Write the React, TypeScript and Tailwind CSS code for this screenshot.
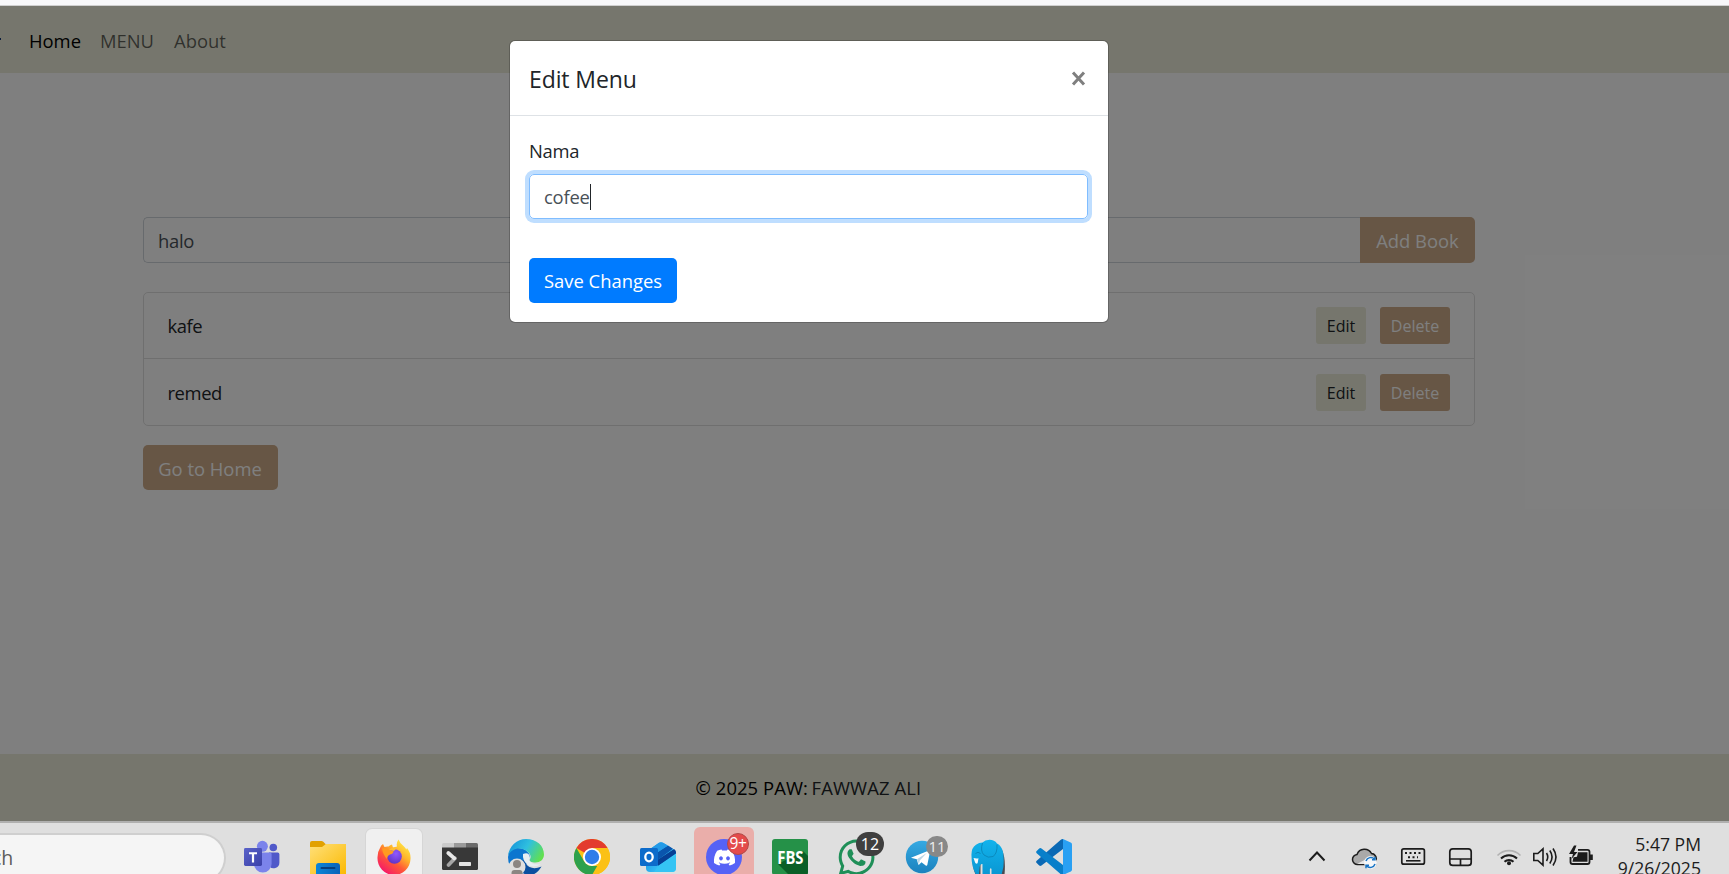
import React from "react";
import { FaDiscord, FaWhatsapp } from "react-icons/fa";

function TeamsIcon() {
  return (
    <svg width="36" height="36" viewBox="0 0 36 36">
      <defs>
        <linearGradient id="tm" x1="0" y1="0" x2="1" y2="1">
          <stop offset="0" stopColor="#5a63c9" />
          <stop offset="1" stopColor="#3a40a8" />
        </linearGradient>
      </defs>
      <circle cx="29.3" cy="8.5" r="3.8" fill="#5059c9" />
      <path d="M25 13.5h8.6a1.8 1.8 0 0 1 1.8 1.8v8.2a5.6 5.6 0 0 1-10.4 3z" fill="#5059c9" />
      <circle cx="18.4" cy="7.3" r="5.5" fill="#7b83eb" />
      <path d="M10 13.5h16a1.6 1.6 0 0 1 1.6 1.6v9.6a8.8 8.8 0 0 1-17.6 0z" fill="#7b83eb" />
      <rect x="0" y="9" width="18" height="18" rx="1.4" fill="url(#tm)" />
      <path d="M5 13.2h8v2h-2.9v8.4H7.9v-8.4H5z" fill="#fff" />
    </svg>
  );
}

function ExplorerIcon() {
  return (
    <svg width="36" height="36" viewBox="0 0 36 36">
      <defs>
        <linearGradient id="ex" x1="0" y1="0" x2="1" y2="1">
          <stop offset="0" stopColor="#ffe07a" />
          <stop offset="1" stopColor="#fbb900" />
        </linearGradient>
        <linearGradient id="exb" x1="0" y1="0" x2="1" y2="0">
          <stop offset="0" stopColor="#0b86d8" />
          <stop offset="1" stopColor="#0b62b8" />
        </linearGradient>
      </defs>
      <path d="M0 4q0-2 2-2h9.500q1 0 1.800.8L16 5.500V12H0z" fill="#e2a100" />
      <path d="M0 8h12l4-3h20v31H0z" fill="url(#ex)" />
      <path d="M6 36v-9q0-3 3-3h18q3 0 3 3v9z" fill="url(#exb)" />
      <rect x="10.500" y="28" width="15" height="2" rx="1" fill="#063f7e" />
    </svg>
  );
}

function FirefoxIcon() {
  return (
    <svg width="36" height="36" viewBox="0 0 36 36">
      <defs>
        <linearGradient id="ff" x1="0.85" y1="0.05" x2="0.2" y2="0.95">
          <stop offset="0" stopColor="#fff04a" />
          <stop offset="0.35" stopColor="#ffb42a" />
          <stop offset="0.62" stopColor="#ff5a36" />
          <stop offset="1" stopColor="#f5156c" />
        </linearGradient>
        <radialGradient id="ffp" cx="0.6" cy="0.3" r="0.8">
          <stop offset="0" stopColor="#9059ff" />
          <stop offset="1" stopColor="#5b2fc0" />
        </radialGradient>
      </defs>
      <path d="M4 9q1-3 3-4l1.500 3q2-.8 4-.5Q14 6 16 5.500l1 3 4-1Q20 4 22.500.5q1.500 4 5 6.500 2 1.500 2.800 3.500l.7-1.500q4 5 3.500 11A16.500 16.500 0 0 1 1.500 19Q1.300 13 4 9z" fill="url(#ff)" />
      <circle cx="18.500" cy="17.500" r="7.300" fill="url(#ffp)" />
      <path d="M6 9.500q4-1.500 7 1.500l4.500 1.300q.2 2.200-3.500 3.200-3 1.500-3 4.500-4-4-5-10.500z" fill="#ff9a1f" />
      <path d="M13 11q4-4 9-1.500-3 .2-4 2.500z" fill="#ffbd2e" />
    </svg>
  );
}

function TerminalIcon() {
  return (
    <svg width="36" height="36" viewBox="0 0 36 36">
      <path d="M0 9V5.500Q0 4 1.500 4H12v5z" fill="#cbcbcb" />
      <path d="M12 4h12v5H12z" fill="#9a9a9a" />
      <path d="M24 4h10.500Q36 4 36 5.500V9H24z" fill="#6b6b6b" />
      <path d="M0 8.500h36v21q0 1.500-1.500 1.500h-33Q0 31 0 29.500z" fill="#383838" />
      <path d="M13 19.300L6.500 26" stroke="#a5a5a5" strokeWidth="3.800" strokeLinecap="round" />
      <path d="M6.300 14l6 5.300" stroke="#e8e8e8" strokeWidth="3.800" strokeLinecap="round" />
      <rect x="17" y="23" width="12" height="4" rx=".8" fill="#e4e4e4" />
    </svg>
  );
}

function EdgeIcon() {
  return (
    <svg width="36" height="36" viewBox="0 0 36 36">
      <defs>
        <linearGradient id="ed" x1="0" y1="0.2" x2="1" y2="0.6">
          <stop offset="0" stopColor="#1493da" />
          <stop offset="0.5" stopColor="#2fc0df" />
          <stop offset="1" stopColor="#62e04f" />
        </linearGradient>
      </defs>
      <path d="M0 18Q1 8 10 9q9 0 12 8l-8 19Q0 32 0 18z" fill="#0c76cf" />
      <path d="M12 22q-3 12 8 14 8 1 13.500-8.500-7 3-12 .5-4-2-5-7z" fill="#0b4fa0" />
      <path d="M0 17C1 7 9 0 18 0c11 0 18 7 18 15.500 0 5-4 8-8.500 8-4 0-7-1-5.500-3.500 1.600-2 .2-5-1.500-6.500C14 7 3 9 0 17z" fill="url(#ed)" />
      <path d="M15 15q5-2 6.500 1.500.8 2-.7 4.500l3 3q3 2 9 1.500-8 4-13.500 0-5-4-4.300-10.500z" fill="#e7eef2" />
      <circle cx="9" cy="28" r="8.500" fill="#e0dfde" />
      <circle cx="9" cy="25" r="4" fill="#8b8682" />
      <path d="M3.500 36v-2q0-3 3-3h5q3 0 3 3v2z" fill="#8b8682" />
    </svg>
  );
}

function ChromeIcon() {
  return (
    <svg width="36" height="36" viewBox="0 0 36 36">
      <circle cx="18" cy="18" r="18" fill="#fbc116" />
      <path d="M18 18L2.400 9A18 18 0 0 1 33.600 9H18z" fill="#e33b2e" />
      <path d="M2.400 9l7.800 13.500Q13 27 18 27h7.800L18.500 36A18 18 0 0 1 2.400 9z" fill="#2da14c" />
      <path d="M25.800 22.500L18 36a18 18 0 0 0 15.600-27H18z" fill="#fbc116" />
      <circle cx="18" cy="18" r="9" fill="#fff" />
      <circle cx="18" cy="18" r="7.200" fill="#2f7de9" />
    </svg>
  );
}

function OutlookIcon() {
  return (
    <svg width="36" height="36" viewBox="0 0 36 36">
      <defs>
        <linearGradient id="ol" x1="0" y1="0" x2="1" y2="0.5">
          <stop offset="0" stopColor="#1b8fe0" />
          <stop offset="1" stopColor="#41d4ff" />
        </linearGradient>
      </defs>
      <path d="M6 13L19 3.800q2-1.200 4 0L34.500 11q1.500 1 1.500 3v15q0 4-4 4H10q-4 0-4-4z" fill="url(#ol)" />
      <path d="M16 14L28 6.500l5 3.200-15 11z" fill="#0a55ad" />
      <path d="M10 10l9-6.200q2-1.200 4 0l5 2.700-12 8z" fill="#249be8" />
      <path d="M18 20.500L34 10q2.500 1.500 2 4.500L18 27z" fill="#063f95" />
      <path d="M18 27l18-11.500V29q0 4-4 4H14z" fill="#35c4f4" />
      <rect x="0" y="9" width="18" height="18" rx="1.500" fill="#0d6ccb" />
      <ellipse cx="9" cy="18" rx="3.700" ry="4.300" fill="none" stroke="#fff" strokeWidth="2.300" />
    </svg>
  );
}

function TelegramIcon() {
  return (
    <svg width="36" height="36" viewBox="0 0 36 36">
      <defs>
        <linearGradient id="tg" x1="0" y1="0" x2="0" y2="1">
          <stop offset="0" stopColor="#35a9e2" />
          <stop offset="1" stopColor="#1b82be" />
        </linearGradient>
      </defs>
      <circle cx="18" cy="18" r="16.200" fill="url(#tg)" />
      <path d="M7.500 18.500L25 11.500q1.200-.3 1 1L23.300 26q-.4 1.200-1.600.5l-4.200-3.200-2.300 2.300q-.7.5-1-.4l-1.400-4.900-5-1.200q-1.200-.2-.3-.6z" fill="#fff" />
      <path d="M13 20.300l10-6.500-7.200 7.700-.8 4z" fill="#b9d5e6" />
    </svg>
  );
}

function ElephantIcon() {
  return (
    <svg width="36" height="36" viewBox="0 0 36 36">
      <defs>
        <linearGradient id="el" x1="0" y1="0" x2="0" y2="1">
          <stop offset="0" stopColor="#12b3ec" />
          <stop offset="1" stopColor="#0a97d3" />
        </linearGradient>
      </defs>
      <path d="M2.500 23q1 9 3.500 13h4.500V25zM32 11q4 8 2.500 25H22V24z" fill="#4a4a50" />
      <path d="M1.500 17Q1 9 6 5.800 9 3.500 12.500 3.500 15 .8 19.500.8q5 0 7.500 3.700 4.500 2 6 8.500 1.200 6 .4 15L31.500 36h-10v-6q-.8-1.500-1.600 0v6h-7.400V25q-2.300-.5-2.800 3L9 35.500H6Q1.500 28 1.500 17z" fill="url(#el)" />
      <path d="M12.500 4q-2.500 8 1.500 12 4 3.500 9 1.500 4.500-3 4-12M5.500 14.500q2.500-2.500 5 0" stroke="#0a86b8" strokeWidth="0.900" fill="none" />
      <path d="M3.500 19q2.500.8 5 .3l-.9 5q-2 1-2.500-.8z" fill="#f4fafc" />
    </svg>
  );
}

function CodeIcon() {
  return (
    <svg width="36" height="36" viewBox="0 0 36 36">
      <path d="M27 0v10L5.500 26.500q-1.200.9-2.300 0l-2.500-2.400q-1.200-1.200 0-2.400L24.500 1q1-1 2.500-1z" fill="#0a69b5" />
      <path d="M27 36V26L5.500 9.500q-1.200-.9-2.300 0L.7 11.900q-1.200 1.200 0 2.400L24.500 35q1 1 2.500 1z" fill="#087fca" />
      <path d="M27 0l7.700 3.500q1.300.6 1.300 2v25q0 1.400-1.300 2L27 36z" fill="#29a0f3" />
    </svg>
  );
}

function Slot({ children }: { children: React.ReactNode }) {
  return <div className="relative flex h-[52px] w-[66px] shrink-0 justify-center pt-4">{children}</div>;
}

function Taskbar() {
  return (
    <div className="flex h-[53px] shrink-0 overflow-hidden border-t-2 border-[#b0b0af] bg-[#dfdfdf] text-[#1c1c1c]">
      <div className="flex h-[51px] w-[229px] shrink-0">
        <div className="mt-[10px] h-[50px] w-[226px] shrink-0 rounded-r-full border-2 border-l-0 border-[#cfcfcf] bg-[#f5f5f5] pt-[9px] text-[19.5px] leading-[27px] text-[#5c5c5c]">
          <span className="-ml-[8px]">ch</span>
        </div>
      </div>
      <Slot><TeamsIcon /></Slot>
      <Slot><ExplorerIcon /></Slot>
      <div className="flex h-[52px] w-[66px] shrink-0 px-[5px] pt-[6px]">
        <div className="flex h-[60px] w-full justify-center rounded-md bg-[#f0f0f0] pt-[10px] ring-1 ring-[#d6d6d6]"><FirefoxIcon /></div>
      </div>
      <Slot><TerminalIcon /></Slot>
      <Slot><EdgeIcon /></Slot>
      <Slot><ChromeIcon /></Slot>
      <Slot><OutlookIcon /></Slot>
      <div className="relative flex h-[52px] w-[66px] shrink-0 px-[3px] pt-[4px]">
        <div className="flex h-[60px] w-full justify-center rounded-md bg-[#eaaeaa] pt-3">
          <div className="flex size-9 items-center justify-center rounded-full bg-[#5662f6]">
            <FaDiscord size={23} color="#fff" />
          </div>
        </div>
        <span className="absolute left-[36px] top-[10px] flex size-[22px] items-center justify-center rounded-full border border-[#b04a48] bg-[#e44b4b] text-[15.5px] leading-none tracking-tight text-white">9+</span>
      </div>
      <Slot>
        <div className="relative flex size-9 items-center justify-center overflow-hidden rounded-[3px] bg-[#259148]">
          <svg className="absolute inset-0" width="36" height="36" viewBox="0 0 36 36"><path d="M31 12l5 5v19H17L6 25z" fill="#0a5f27" /></svg>
          <span className="relative scale-x-[0.8] text-[18.5px] font-bold leading-none text-white">FBS</span>
        </div>
      </Slot>
      <Slot>
        <FaWhatsapp size={41} color="#1f8f58" className="-mt-[2px] shrink-0" />
        <span className="absolute left-[33px] top-[9px] flex h-6 w-7 items-center justify-center rounded-full bg-[#3f3f3f] text-[16px] leading-none text-white">12</span>
      </Slot>
      <Slot>
        <TelegramIcon />
        <span className="absolute left-[37px] top-[12.500px] flex h-[21px] w-[22px] items-center justify-center rounded-full bg-[#888] text-[15px] leading-none text-[#eee]">11</span>
      </Slot>
      <Slot><ElephantIcon /></Slot>
      <Slot><CodeIcon /></Slot>
      <div className="ml-auto flex h-[52px] shrink-0 pr-7">
        <svg className="mt-[25px] overflow-visible" width="293" height="22" viewBox="1306 848 293 22" fill="none" stroke="#1c1c1c" strokeWidth="1.700">
          <path d="M1309.500 860.500l7.500-8 7.500 8" strokeWidth="2" />
          <path d="M1358 864.500a5 5 0 0 1-1-10 8 8 0 0 1 14.500-1 5.500 5.500 0 0 1 4 8.500v2.500z" fill="#a9a9a9" strokeWidth="1.500" />
          <path d="M1357 864l13-7 5.500 3v4z" fill="#e6e6e6" stroke="none" />
          <circle cx="1370.500" cy="862.500" r="6.500" fill="#f5f7f9" stroke="none" />
          <path d="M1366 861a5 5 0 0 1 8.500-1.800M1375 864a5 5 0 0 1-8.500 1.800M1375 856.800v3h-3M1366 868.200v-3h3" stroke="#1673c4" strokeWidth="1.500" />
          <rect x="1401.800" y="848.800" width="22.600" height="15.400" rx="2" />
          <path d="M1405 853h15.500M1408 857.200h10" strokeWidth="2" strokeDasharray="2 2.500" />
          <path d="M1406 860.800h14.500" strokeWidth="1.600" />
          <rect x="1449.800" y="848.800" width="21.400" height="16.600" rx="3" />
          <path d="M1450 859h21M1460.500 859v6.500" />
          <path d="M1497.500 855.500a16 16 0 0 1 23 0" stroke="#b2b2b2" strokeWidth="1.600" />
          <path d="M1501 858.500a11.500 11.500 0 0 1 16 0M1504.500 861.800a6.500 6.500 0 0 1 9 0" strokeWidth="2" />
          <circle cx="1509" cy="863.300" r="2" fill="#1c1c1c" stroke="none" />
          <path d="M1533.800 853.500h4l5.200-4.700v16.400l-5.200-4.700h-4zM1546.500 853q2.500 4 0 8M1549.800 850.500q4.500 6.500 0 13M1553 848.500q6 8.500 0 17" strokeWidth="1.600" />
          <path d="M1578 849.800h9.500q2 0 2 2v10.200q0 2-2 2h-15q-2 0-2-2V857" strokeWidth="1.800" />
          <path d="M1578 852.200h9.500v9.600h-15l1-4.500 3.500-.5zM1590 854.500h2.800v5.500h-2.800zM1574 845.500l-5 8.500h4l-1.500 5 6-7h-3.500l2.500-6.500z" fill="#1c1c1c" stroke="none" />
        </svg>
        <div className="w-[102px] whitespace-nowrap pt-[9px] text-right text-[17.6px] leading-[24px]">
          <div>5:47 PM</div>
          <div>9/26/2025</div>
        </div>
      </div>
    </div>
  );
}

function Row({ name }: { name: string }) {
  return (
    <div className="flex h-[66px] items-center border-b border-[#dfdfdf] pl-[23.5px] pr-6 last:border-b-0">
      <span className="grow pt-[2px] text-[18.4px] tracking-[-0.4px] text-[#212529]">{name}</span>
      <button className="mr-[14px] h-[37px] w-[50px] rounded-[3px] bg-[#ecedda] pt-[2px] text-[16px] text-[#212529]">Edit</button>
      <button className="h-[37px] w-[70px] rounded-[3px] bg-[#ceac8a] pt-[2px] text-[16px] text-white">Delete</button>
    </div>
  );
}

export default function App() {
  return (
    <div className="relative flex h-[874px] w-full flex-col overflow-hidden bg-white font-['Open_Sans','Noto_Sans',sans-serif] text-[18.4px] leading-[28.8px]">
      <div className="h-[6px] shrink-0 border-b border-[#cfcfcf] bg-[#f7f7f9]" />
      <nav className="flex h-[67px] shrink-0 items-center bg-[#ecedda] pt-[3px] pl-[29px]">
        <span className="w-[71px] text-black">Home</span>
        <span className="w-[74px] text-black/60">MENU</span>
        <span className="text-black/60">About</span>
      </nav>
      <main className="ml-[143px] flex w-[1332px] grow flex-col pt-[144px]">
        <div className="flex h-[46px]">
          <div className="flex grow items-center rounded-l-[5px] border border-r-0 border-[#ced4da] pl-[14px] pt-[3px] tracking-[-0.3px] text-[#495057]">halo</div>
          <button className="w-[115px] rounded-r-[5px] bg-[#ceac8a] pt-[3px] text-white">Add Book</button>
        </div>
        <div className="mt-[29px] rounded-[5px] border border-[#dfdfdf]">
          <Row name="kafe" />
          <Row name="remed" />
        </div>
        <button className="mt-[19px] h-[45px] w-[135px] rounded-[5px] bg-[#ceac8a] pt-[3px] pr-px text-white">Go to Home</button>
      </main>
      <footer className="flex h-[67px] shrink-0 items-center bg-[#ecedda] pt-px pl-[695.5px] text-[#212529]">
        <span className="w-[116px] whitespace-nowrap tracking-[0.1px] text-black">© 2025 PAW:</span>
        <span className="tracking-[0.15px]">FAWWAZ ALI</span>
      </footer>
      <Taskbar />
      <div className="absolute inset-x-0 top-[6px] h-[815px] bg-black/50">
        <span className="absolute left-0 top-[32px] h-[2px] w-px bg-[#0a1c3c]" />
        <section className="ml-[509px] mt-[34px] h-[283px] w-[600px] rounded-[6px] border border-black/20 bg-white bg-clip-padding text-[#212529]">
          <header className="flex h-[75px] items-center justify-between border-b border-[#dee2e6] px-[19px]">
            <h5 className="pt-[2px] text-[23px] leading-[34px] tracking-[-0.1px]">Edit Menu</h5>
            <svg className="mr-[3px]" width="15" height="15" viewBox="0 0 15 15"><path d="M2 1.500l11 12M13 1.500l-11 12" stroke="#7f7f7f" strokeWidth="3" /></svg>
          </header>
          <div className="px-[19px] pt-[21px]">
            <label className="block h-[37px] tracking-[-0.3px]">Nama</label>
            <div className="flex h-[45px] w-[559px] items-center rounded-[5px] border border-[#80bdff] pl-[14px] text-[#495057] ring-4 ring-[#bfdeff]">
              <span className="pt-[2px] tracking-[-0.2px]">cofee</span>
              <span className="h-[26px] w-px bg-[#212529]" />
            </div>
            <button className="mt-[39px] h-[45px] w-[148px] rounded-[5px] bg-[#007bff] pt-[2px] text-white">Save Changes</button>
          </div>
        </section>
      </div>
    </div>
  );
}
